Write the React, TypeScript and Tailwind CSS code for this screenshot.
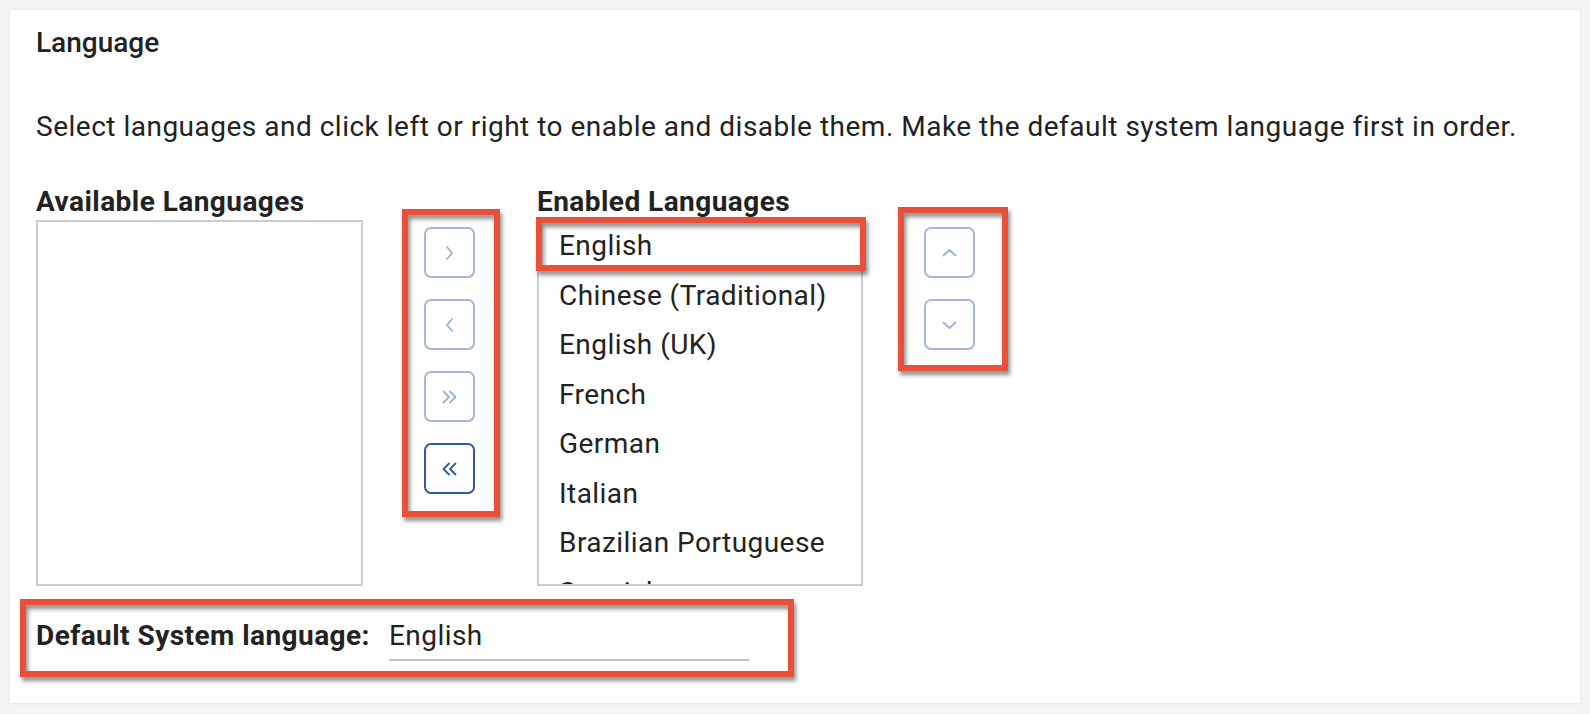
import React from "react";

// ============================================================================
// DATA
// ============================================================================

const ENABLED_LANGUAGES = [
  "English",
  "Chinese (Traditional)",
  "English (UK)",
  "French",
  "German",
  "Italian",
  "Brazilian Portuguese",
  "Spanish",
];

// ============================================================================
// ICONS
// ============================================================================

type Arrow = "right" | "left" | "allRight" | "allLeft" | "up" | "down";

function ArrowIcon({ kind }: { kind: Arrow }) {
  const paths: Record<Arrow, string> = {
    right: "M7 3 L12 9 L7 15",
    left: "M12 3 L7 9 L12 15",
    allRight: "M3.5 3.5 L9 9 L3.5 14.5 M10 3.5 L15.5 9 L10 14.5",
    allLeft: "M9 3.5 L3.5 9 L9 14.5 M15.5 3.5 L10 9 L15.5 14.5",
    up: "M3.5 11.5 L9.5 6 L15.5 11.5",
    down: "M3.5 6.5 L9.5 12 L15.5 6.5",
  };
  return (
    <svg width="19" height="18" viewBox="0 0 19 18" fill="none" aria-hidden="true">
      <path d={paths[kind]} stroke="currentColor" strokeWidth="1.8" strokeLinecap="round" strokeLinejoin="round" />
    </svg>
  );
}

// ============================================================================
// SUB-COMPONENTS
// ============================================================================

// Square move button - light blue when disabled, dark blue when active
function MoveButton({ kind, active = false }: { kind: Arrow; active?: boolean }) {
  return (
    <button
      className={
        active
          ? "flex h-[51px] w-[51px] items-center justify-center rounded-[7px] border-2 border-[#2f5a9e] bg-white text-[#2f5a9e]"
          : "flex h-[51px] w-[51px] items-center justify-center rounded-[7px] border-2 border-[#a6b8d8] bg-white text-[#9cb0d4]"
      }
    >
      <ArrowIcon kind={kind} />
    </button>
  );
}

// Red annotation frame laid over the screenshot
function Callout() {
  return (
    <div className="pointer-events-none absolute inset-0 border-[6px] border-[#e8503a] drop-shadow-[2px_4px_2px_rgba(0,0,0,0.45)]" />
  );
}

// ============================================================================
// MAIN COMPONENT
// ============================================================================

export default function App() {
  return (
    <div className="h-[714px] w-[1590px] overflow-hidden bg-[#f5f5f5] pt-[10px] font-[Roboto,sans-serif] text-[#222222]">
      <section className="mx-[10px] h-[693px] bg-white pl-[26px] pt-[17px] shadow-[0_0_4px_rgba(0,0,0,0.08)]">
        <h2 className="text-[28px] font-medium leading-[32px]">Language</h2>

        <p className="mt-[52px] text-[28px] leading-[32px] tracking-[0.5px]">
          Select languages and click left or right to enable and disable them. Make the default system language first in order.
        </p>

        {/* Lists + move buttons */}
        <div className="mt-[43px] flex items-start">
          {/* Available */}
          <div className="w-[327px]">
            <h3 className="whitespace-nowrap text-[28px] font-bold leading-[32px] tracking-[0.45px]">Available Languages</h3>
            <div className="mt-[2px] h-[366px] border-2 border-[#cccccc]" />
          </div>

          {/* Left / right */}
          <div className="relative ml-[39px] mt-[23px] flex flex-col gap-[21px] pb-[23px] pl-[22px] pr-[25px] pt-[18px]">
            <MoveButton kind="right" />
            <MoveButton kind="left" />
            <MoveButton kind="allRight" />
            <MoveButton kind="allLeft" active />
            <Callout />
          </div>

          {/* Enabled */}
          <div className="relative ml-[37px] w-[326px]">
            <h3 className="whitespace-nowrap text-[28px] font-bold leading-[32px] tracking-[0.45px]">Enabled Languages</h3>
            <ul className="mt-[2px] h-[366px] overflow-hidden border-2 border-[#cccccc]">
              <div className="-mt-[1px]">
                {ENABLED_LANGUAGES.map((lang) => (
                  <li key={lang} className="whitespace-nowrap pl-5 text-[28px] leading-[49.5px] tracking-[0.45px]">
                    {lang}
                  </li>
                ))}
              </div>
            </ul>
            <div className="pointer-events-none absolute -left-[1px] top-[31px] h-[54px] w-[330px]">
              <Callout />
            </div>
          </div>

          {/* Up / down */}
          <div className="relative ml-[35px] mt-[21px] flex flex-col gap-[21px] pb-[21px] pl-[26px] pr-[33px] pt-[20px]">
            <MoveButton kind="up" />
            <MoveButton kind="down" />
            <Callout />
          </div>
        </div>

        {/* Default system language */}
        <div className="relative -ml-[16px] mt-[13px] flex h-[78px] w-[774px] items-start pl-[16px] pt-[21px]">
          <span className="whitespace-nowrap text-[28px] font-bold leading-[32px] tracking-[0.45px]">Default System language:</span>
          <div className="ml-[19px] w-[360px] border-b-2 border-[#c4c4c4] pb-[7px]">
            <span className="text-[28px] leading-[32px] tracking-[0.45px]">English</span>
          </div>
          <Callout />
        </div>
      </section>
    </div>
  );
}
